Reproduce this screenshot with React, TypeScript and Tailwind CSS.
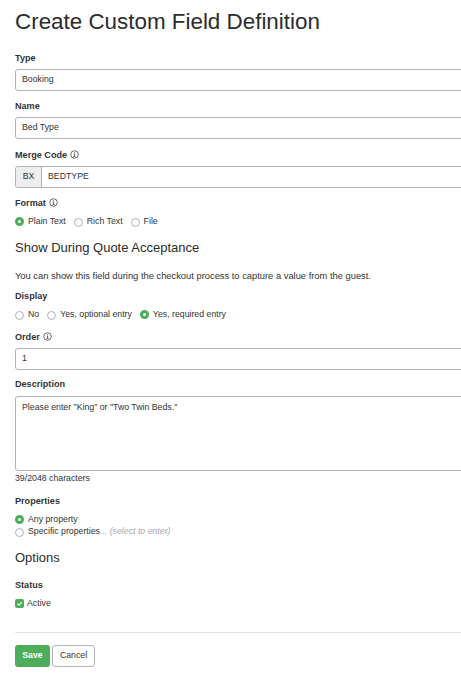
import type { ReactNode } from "react";

const font = { fontFamily: '"Liberation Sans", Arial, sans-serif' };

function Info() {
  return (
    <svg viewBox="0 0 10 10" className="inline-block w-[9px] h-[9px] ml-[3px] align-[-1px]" fill="none" stroke="#333">
      <circle cx="5" cy="5" r="4.2" strokeWidth="0.8" />
      <path d="M4 4.4h1.1v2.6M3.9 7.2h2.3M5 2.4v1" strokeWidth="0.8" />
    </svg>
  );
}

function Label({ children, className = "" }: { children: ReactNode; className?: string }) {
  return <div className={`text-[9.1px] leading-[14px] font-bold text-[#333] ${className}`}>{children}</div>;
}

function Radio({ checked = false, label }: { checked?: boolean; label: ReactNode }) {
  return (
    <span className="inline-flex items-center">
      {checked ? (
        <span className="w-[9px] h-[9px] rounded-full border-[3px] border-[#4cae5b] bg-white mt-[1px]" />
      ) : (
        <span className="w-[9px] h-[9px] rounded-full border border-[#a9b2b8] bg-white mt-[2px]" />
      )}
      <span className="ml-[4px]">{label}</span>
    </span>
  );
}

function Field({ value }: { value: string }) {
  return (
    <div className="h-[22px] w-[470px] border border-[#adb5bb] rounded-[3px] pl-[6px] flex items-center text-[#333]">
      {value}
    </div>
  );
}

export default function App() {
  return (
    <div className="w-[461px] h-[674px] overflow-hidden bg-white pl-[15px] text-[8.75px] text-[#333]" style={font}>
      <h1 className="text-[22.4px] leading-[28px] pt-[8px] text-[#2b2b2b]">Create Custom Field Definition</h1>

      <Label className="mt-[15px]">Type</Label>
      <div className="mt-[4px]"><Field value="Booking" /></div>

      <Label className="mt-[8px]">Name</Label>
      <div className="mt-[4px]"><Field value="Bed Type" /></div>

      <Label className="mt-[9px]">Merge Code<Info /></Label>
      <div className="mt-[4px] h-[22px] w-[470px] border border-[#adb5bb] rounded-[3px] flex items-center">
        <span className="h-full w-[26px] bg-[#eceeef] border-r border-[#adb5bb] flex items-center justify-center rounded-l-[3px]">BX</span>
        <span className="pl-[6px]">BEDTYPE</span>
      </div>

      <Label className="mt-[8px]">Format<Info /></Label>
      <div className="mt-[4px] flex gap-[8px] leading-[14px]">
        <Radio checked label="Plain Text" />
        <Radio label="Rich Text" />
        <Radio label="File" />
      </div>

      <h2 className="text-[13px] leading-[18px] mt-[11px] text-[#2b2b2b]">Show During Quote Acceptance</h2>
      <p className="mt-[12px] leading-[14px] text-[9.35px]">You can show this field during the checkout process to capture a value from the guest.</p>

      <Label className="mt-[6px]">Display</Label>
      <div className="mt-[4px] flex gap-[8px] leading-[14px]">
        <Radio label="No" />
        <Radio label="Yes, optional entry" />
        <Radio checked label="Yes, required entry" />
      </div>

      <Label className="mt-[9px]">Order<Info /></Label>
      <div className="mt-[4px]"><Field value="1" /></div>

      <Label className="mt-[7px]">Description</Label>
      <div className="mt-[5px] h-[75px] w-[470px] border border-[#adb5bb] rounded-[3px] pl-[6px] pt-[3px] leading-[14px]">
        Please enter "King" or "Two Twin Beds."
      </div>

      <div className="leading-[14px]">39/2048 characters</div>

      <Label className="mt-[9px]">Properties</Label>
      <div className="mt-[5px] flex flex-col leading-[12px]">
        <Radio checked label="Any property" />
        <Radio label={<>Specific properties<span className="text-[#aaa] italic">... (select to enter)</span></>} />
      </div>

      <h2 className="text-[13px] leading-[18px] mt-[12px] text-[#2b2b2b]">Options</h2>

      <Label className="mt-[11px]">Status</Label>
      <div className="mt-[4px] flex items-center leading-[14px]">
        <span className="w-[9px] h-[9px] rounded-[2px] bg-[#4cae5b] flex items-center justify-center">
          <svg viewBox="0 0 9 9" className="w-[9px] h-[9px]" fill="none" stroke="#fff" strokeWidth="1.2">
            <path d="M2.4 4.8l1.5 1.4 2.8-3" />
          </svg>
        </span>
        <span className="ml-[3px]">Active</span>
      </div>

      <div className="mt-[22px] border-t border-[#e3e5e6] w-[470px]" />

      <div className="mt-[12px] flex gap-[2px]">
        <button className="h-[22px] w-[35px] rounded-[3px] bg-[#4cae5b] text-white font-bold text-[8.75px]">Save</button>
        <button className="h-[22px] w-[43px] rounded-[3px] border border-[#adb5bb] bg-white text-[8.75px] text-[#333]">Cancel</button>
      </div>
    </div>
  );
}
